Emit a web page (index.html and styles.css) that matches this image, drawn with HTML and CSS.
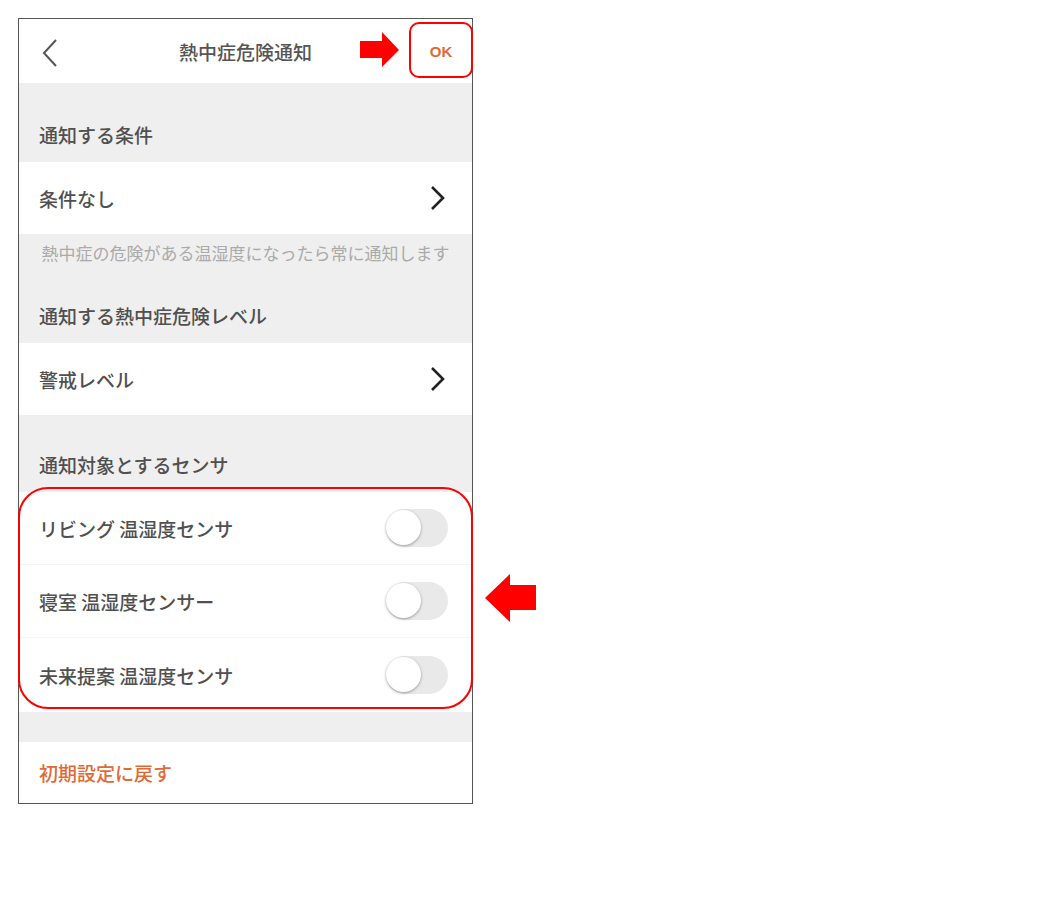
FILE: index.html
```html
<!DOCTYPE html>
<html lang="ja">
<head>
    <meta charset="UTF-8">
    <meta name="viewport" content="width=device-width, initial-scale=1.0">
    <title>熱中症危険通知</title>
    <link rel="stylesheet" href="styles.css">
</head>
<body>
    <div class="page">
        <!-- Phone screen -->
        <div class="screen">
            <div class="header">
                <span class="back">
                    <svg width="18" height="30" viewBox="0 0 18 30"><path d="M15 2 L3 15 L15 28" fill="none" stroke="#555" stroke-width="2"/></svg>
                </span>
                <span class="header-title">熱中症危険通知</span>
                <span class="ok">OK</span>
                <span class="ok-mark"></span>
            </div>

            <div class="section-title first">通知する条件</div>
            <div class="row">
                <span>条件なし</span>
                <svg class="chevron" width="18" height="28" viewBox="0 0 18 28"><path d="M3 3 L14 14 L3 25" fill="none" stroke="#222" stroke-width="2.6"/></svg>
            </div>
            <div class="note">熱中症の危険がある温湿度になったら常に通知します</div>

            <div class="section-title second">通知する熱中症危険レベル</div>
            <div class="row">
                <span>警戒レベル</span>
                <svg class="chevron" width="18" height="28" viewBox="0 0 18 28"><path d="M3 3 L14 14 L3 25" fill="none" stroke="#222" stroke-width="2.6"/></svg>
            </div>

            <div class="section-title">通知対象とするセンサ</div>
            <div class="sensors">
                <div class="row sensor">
                    <span>リビング 温湿度センサ</span>
                    <span class="toggle"><span class="knob"></span></span>
                </div>
                <div class="row sensor">
                    <span>寝室 温湿度センサー</span>
                    <span class="toggle"><span class="knob"></span></span>
                </div>
                <div class="row sensor">
                    <span>未来提案 温湿度センサ</span>
                    <span class="toggle"><span class="knob"></span></span>
                </div>
            </div>

            <div class="spacer"></div>
            <div class="row reset">初期設定に戻す</div>
        </div>

        <!-- Annotation arrows -->
        <svg class="arrow arrow-right" width="40" height="36" viewBox="0 0 40 36"><polygon points="0,9 22,9 22,0 39,18 22,35 22,26 0,26" fill="#ff0000"/></svg>
        <svg class="arrow arrow-left" width="52" height="48" viewBox="0 0 52 48"><polygon points="0,24 25,0 25,11 51,11 51,36 25,36 25,48" fill="#ff0000"/></svg>
    </div>
</body>
</html>
```

FILE: styles.css
```css
body {
    margin: 0;
    font-family: "Noto Sans CJK JP", "Noto Sans", sans-serif;
    background: #fff;
}
.page {
    position: relative;
    padding: 18px 0 0 18px;
}
.screen {
    width: 453px;
    border: 1px solid #555;
    background: #efefef;
    color: #505050;
    font-size: 19px;
    font-weight: 500;
}
.header {
    position: relative;
    height: 64px;
    background: #fff;
    display: flex;
    align-items: center;
    justify-content: center;
}
.back {
    position: absolute;
    left: 22px;
    top: 19px;
}
.header-title {
    font-size: 19px;
    color: #555;
}
.ok {
    position: absolute;
    right: 0;
    top: 5px;
    width: 62px;
    height: 55px;
    line-height: 55px;
    text-align: center;
    font-family: "Liberation Sans", Arial, sans-serif;
    font-weight: bold;
    font-size: 15px;
    color: #df6a35;
}
.ok-mark {
    position: absolute;
    right: -1px;
    top: 3px;
    width: 60px;
    height: 52px;
    border: 2px solid #ff0000;
    border-radius: 10px;
}
.section-title {
    padding: 37px 20px 14px;
    line-height: 26px;
}
.section-title.first {
    padding-top: 39px;
}
.section-title.second {
    padding-top: 31px;
}
.row {
    box-sizing: border-box;
    height: 72px;
    background: #fff;
    display: flex;
    align-items: center;
    justify-content: space-between;
    padding: 0 25px 0 20px;
}
.chevron {
    display: block;
}
.note {
    height: 38px;
    line-height: 38px;
    text-align: center;
    font-size: 17px;
    font-weight: normal;
    color: #aaa;
}
.sensors {
    position: relative;
}
.sensors::after {
    content: "";
    position: absolute;
    top: -5px;
    bottom: 3px;
    left: -1px;
    right: -1px;
    border: 2px solid #ff0000;
    border-radius: 30px;
}
.row.sensor {
    height: 73px;
    border-bottom: 1px solid #f5f5f5;
    padding-right: 24px;
}
.row.sensor:last-child {
    height: 74px;
    border-bottom: none;
}
.toggle {
    position: relative;
    width: 62px;
    height: 38px;
    border-radius: 19px;
    background: #e9e9e9;
}
.knob {
    position: absolute;
    left: 0;
    top: 1px;
    width: 35px;
    height: 35px;
    border-radius: 50%;
    background: #fff;
    box-shadow: 0 1px 3px rgba(0, 0, 0, 0.35);
}
.spacer {
    height: 30px;
}
.row.reset {
    height: 61px;
    color: #df6a35;
}
.arrow {
    position: absolute;
}
.arrow-right {
    left: 360px;
    top: 32px;
}
.arrow-left {
    left: 485px;
    top: 574px;
}
```
